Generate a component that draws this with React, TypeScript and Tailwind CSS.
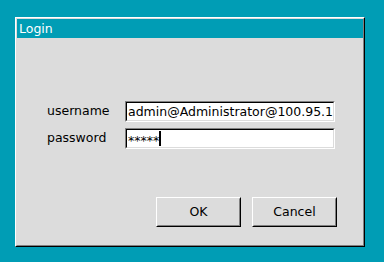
import React from "react";

export default function App() {
  const font = { fontFamily: '"DejaVu Sans", sans-serif' };
  return (
    <div className="w-[384px] h-[262px] bg-[#009db5] pt-[17px] pl-[15px]" style={font}>
      <div className="w-[350px] h-[230px] border border-t-white border-l-white border-r-black border-b-black">
        <div className="w-full h-full border border-t-[#dcdcdc] border-l-[#dcdcdc] border-r-[#808080] border-b-[#808080] bg-[#dcdcdc] flex flex-col">
          <div className="h-[19px] bg-[#009db5] text-white text-[12.5px] leading-[19px] pl-[2px]">Login</div>
          <div className="flex-1 flex flex-col pl-[30px] pt-[63px]">
            <div className="flex items-center h-[21px]">
              <div className="w-[78px] text-[12.5px] text-black">username</div>
              <div className="w-[210px] h-[21px] border border-t-[#808080] border-l-[#808080] border-r-white border-b-white">
                <div className="w-full h-full border border-t-black border-l-black border-r-[#dcdcdc] border-b-[#dcdcdc] bg-white overflow-hidden whitespace-nowrap text-[12.5px] leading-[17px] pl-[1px] text-black">
                  admin@Administrator@100.95.1
                </div>
              </div>
            </div>
            <div className="flex items-center h-[21px] mt-[6px]">
              <div className="w-[78px] text-[12.5px] text-black">password</div>
              <div className="w-[210px] h-[21px] border border-t-[#808080] border-l-[#808080] border-r-white border-b-white">
                <div className="w-full h-full border border-t-black border-l-black border-r-[#dcdcdc] border-b-[#dcdcdc] bg-white overflow-hidden whitespace-nowrap pl-[1px] text-black flex items-center">
                  <span className="text-[12.5px] leading-[17px] mt-[3px]">*****</span>
                  <span className="inline-block w-[2px] h-[15px] bg-black" />
                </div>
              </div>
            </div>
            <div className="flex justify-end gap-[11px] mt-[48px] pr-[26px]">
              {["OK", "Cancel"].map((t) => (
                <div key={t} className="w-[85px] h-[30px] border border-t-white border-l-white border-r-black border-b-black">
                  <div className="w-full h-full border border-t-[#dcdcdc] border-l-[#dcdcdc] border-r-[#808080] border-b-[#808080] flex items-center justify-center text-[12.5px] text-black">
                    {t}
                  </div>
                </div>
              ))}
            </div>
          </div>
        </div>
      </div>
    </div>
  );
}
